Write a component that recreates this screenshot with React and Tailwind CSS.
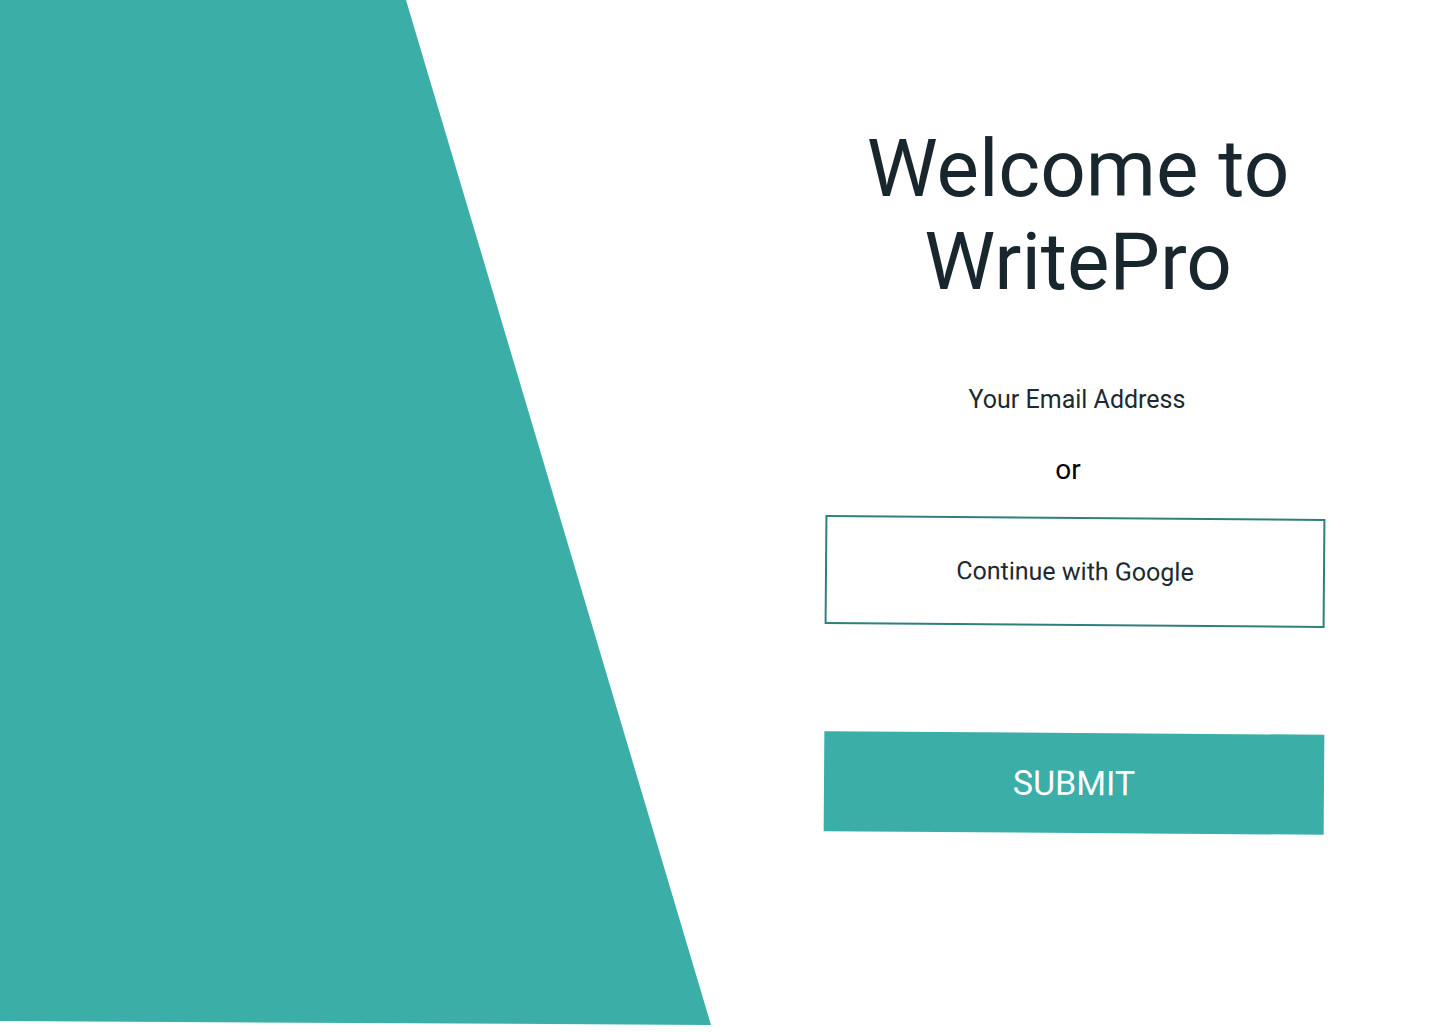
import React from "react";

const TEAL = "#3baea8";

export default function App() {
  return (
    <div className="relative w-full h-[1032px] bg-white overflow-hidden font-['Roboto',_'Liberation_Sans',_sans-serif]">
      {/* background shape */}
      <svg
        className="absolute inset-0 pointer-events-none"
        width="1444"
        height="1032"
        viewBox="0 0 1444 1032"
      >
        <polygon points="0,0 406,0 711,1025 0,1021" fill={TEAL} />
      </svg>

      <div className="relative flex justify-end pr-[119px]">
        <div className="w-[500px] flex flex-col items-center pt-[123px]">
          <h1 className="text-[80px] leading-[93px] text-[#18262d] text-center font-normal translate-x-[3px]">
            Welcome to
            <br />
            WritePro
          </h1>

          <label className="mt-[76px] text-[25px] leading-[30px] text-[#1c2a31] translate-x-[2px]">
            Your Email Address
          </label>

          <p className="mt-[38px] text-[28px] leading-[34px] text-black -translate-x-[7px]">
            or
          </p>

          <button className="mt-[30px] w-[500px] h-[109px] border-2 border-[#2f807b] bg-white rotate-[0.46deg] flex items-center justify-center text-[25px] text-[#1c2a31]">
            Continue with Google
          </button>

          <button className="mt-[107px] w-[500px] h-[100px] bg-[#3baea8] rotate-[0.4deg] flex items-center justify-center text-[34px] text-white -translate-x-[1px]">
            SUBMIT
          </button>
        </div>
      </div>
    </div>
  );
}
